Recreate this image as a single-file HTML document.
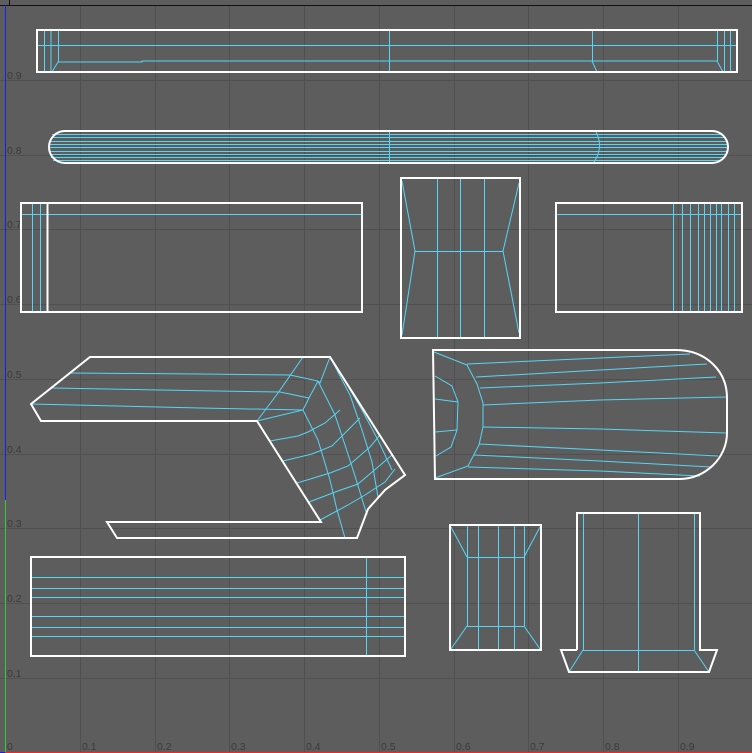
<!DOCTYPE html>
<html><head><meta charset="utf-8"><style>
html,body{margin:0;padding:0;background:#5d5d5d;}
svg{display:block;}
text{font-family:"Liberation Sans",sans-serif;font-size:10.5px;fill:#3a3a3a;}
</style></head><body>
<svg width="752" height="753" viewBox="0 0 752 753" xmlns="http://www.w3.org/2000/svg">
<rect width="752" height="753" fill="#5d5d5d"/>
<g stroke="#505050" stroke-width="1">
<line x1="80.5" y1="5" x2="80.5" y2="753"/><line x1="155.5" y1="5" x2="155.5" y2="753"/>
<line x1="229.5" y1="5" x2="229.5" y2="753"/><line x1="304.5" y1="5" x2="304.5" y2="753"/>
<line x1="379.5" y1="5" x2="379.5" y2="753"/><line x1="454.5" y1="5" x2="454.5" y2="753"/>
<line x1="528.5" y1="5" x2="528.5" y2="753"/><line x1="603.5" y1="5" x2="603.5" y2="753"/>
<line x1="678.5" y1="5" x2="678.5" y2="753"/>
<line x1="0" y1="80.5" x2="752" y2="80.5"/><line x1="0" y1="155.5" x2="752" y2="155.5"/>
<line x1="0" y1="229.5" x2="752" y2="229.5"/><line x1="0" y1="304.5" x2="752" y2="304.5"/>
<line x1="0" y1="379.5" x2="752" y2="379.5"/><line x1="0" y1="454.5" x2="752" y2="454.5"/>
<line x1="0" y1="528.5" x2="752" y2="528.5"/><line x1="0" y1="603.5" x2="752" y2="603.5"/>
<line x1="0" y1="678.5" x2="752" y2="678.5"/>
</g>
<line x1="0" y1="5.5" x2="752" y2="5.5" stroke="#111" stroke-width="1"/>
<line x1="9.5" y1="0" x2="9.5" y2="5" stroke="#111"/>
<line x1="5.5" y1="5" x2="5.5" y2="500" stroke="#1a1aff"/>
<line x1="5.5" y1="500" x2="5.5" y2="752" stroke="#33cc33"/>
<line x1="5" y1="752.5" x2="752" y2="752.5" stroke="#ff2020"/>
<line x1="0" y1="752.5" x2="5" y2="752.5" stroke="#1a1aff"/>
<g>
<text x="7" y="79">0.9</text><text x="7" y="154">0.8</text><text x="7" y="228">0.7</text>
<text x="7" y="303">0.6</text><text x="7" y="378">0.5</text><text x="7" y="453">0.4</text>
<text x="7" y="527">0.3</text><text x="7" y="602">0.2</text><text x="7" y="677">0.1</text>
<text x="7" y="750">0</text><text x="82" y="750">0.1</text><text x="157" y="750">0.2</text>
<text x="231" y="750">0.3</text><text x="306" y="750">0.4</text><text x="381" y="750">0.5</text>
<text x="456" y="750">0.6</text><text x="530" y="750">0.7</text><text x="605" y="750">0.8</text>
<text x="680" y="750">0.9</text>
</g>
<g stroke="#55d6f6" stroke-width="1" fill="none">
<line x1="44.5" y1="31" x2="44.5" y2="72"/><line x1="51" y1="31" x2="51" y2="72"/>
<line x1="58.5" y1="31" x2="58.5" y2="62"/><line x1="38" y1="45.5" x2="737" y2="45.5"/>
<polyline points="52,72 58,62 142,62 142,61 592,61 597,72"/>
<polyline points="592,61 717,61 723,72"/>
<line x1="389.5" y1="31" x2="389.5" y2="72"/><line x1="592.5" y1="31" x2="592.5" y2="61"/>
<line x1="717.5" y1="31" x2="717.5" y2="61"/><line x1="724.5" y1="31" x2="724.5" y2="72"/><line x1="730.5" y1="31" x2="730.5" y2="72"/>
<line x1="52" y1="134.5" x2="722" y2="134.5"/><line x1="51" y1="137.5" x2="724" y2="137.5"/>
<line x1="50" y1="141.5" x2="726" y2="141.5"/><line x1="50" y1="144.5" x2="727" y2="144.5"/>
<line x1="50" y1="147.5" x2="727" y2="147.5"/><line x1="50" y1="151.5" x2="727" y2="151.5"/>
<line x1="50" y1="154.5" x2="726" y2="154.5"/><line x1="51" y1="157.5" x2="724" y2="157.5"/>
<line x1="53" y1="160.5" x2="720" y2="160.5"/>
<line x1="389.5" y1="132" x2="389.5" y2="162"/>
<path d="M596,132 Q604,147 594,162"/>
<line x1="32.5" y1="204" x2="32.5" y2="311"/><line x1="40.5" y1="204" x2="40.5" y2="311"/>
<line x1="22" y1="214.5" x2="361" y2="214.5"/>
<line x1="437.5" y1="179" x2="437.5" y2="337"/><line x1="460.5" y1="179" x2="460.5" y2="337"/><line x1="484.5" y1="179" x2="484.5" y2="337"/>
<polyline points="402,181 415,251 402,335"/><polyline points="519,183 503,251 519,333"/>
<line x1="415" y1="251.5" x2="503" y2="251.5"/>
<line x1="557" y1="214.5" x2="741" y2="214.5"/>
<line x1="673.5" y1="204" x2="673.5" y2="311"/><line x1="682.5" y1="204" x2="682.5" y2="311"/>
<line x1="690.5" y1="204" x2="690.5" y2="311"/><line x1="698.5" y1="204" x2="698.5" y2="311"/>
<line x1="704.5" y1="204" x2="704.5" y2="311"/><line x1="710.5" y1="204" x2="710.5" y2="311"/>
<line x1="716.5" y1="204" x2="716.5" y2="311"/><line x1="721.5" y1="204" x2="721.5" y2="311"/>
<line x1="728.5" y1="204" x2="728.5" y2="311"/><line x1="734.5" y1="204" x2="734.5" y2="311"/>
<polyline points="71,373 200,374 290,375 318,381"/>
<polyline points="52,388 160,390 280,392 309,398"/>
<polyline points="31,404 200,408 303,410"/>
<polyline points="303,357 278,393 257,421"/>
<polyline points="318,381 309,398 303,410 257,421"/>
<polyline points="330,357 320,383 318,381"/>
<polyline points="270,441 298,436 308,432 325,423 340,410"/>
<polyline points="283,461 312,454 332,446 350,428 360,418"/>
<polyline points="297,483 330,473 348,466 370,447 380,435"/>
<polyline points="309,502 338,491 358,484 378,467 392,455"/>
<polyline points="320,520 348,505 365,495 385,482 395,469"/>
<polyline points="318,381 335,415 345,445 355,476 367,515"/>
<polyline points="330,357 350,395 362,430 372,462 378,497"/>
<polyline points="345,381 362,410 378,440 392,470"/>
<polyline points="303,410 318,440 330,480 337,510 345,538"/>
<polyline points="434,352 467,365 477,384 483,403 483,427 479,445 468,466 435,478"/>
<polyline points="435,376 452,386 458,402 457,430 451,447 436,456"/>
<line x1="435" y1="399" x2="458" y2="402"/><line x1="435" y1="432" x2="457" y2="430"/>
<polyline points="467,364 600,358 690,354"/><polyline points="476,377 600,370 707,364"/>
<polyline points="480,388 600,383 716,377"/><polyline points="483,405 600,400 726,397"/>
<polyline points="483,427 600,429 727,433"/><polyline points="479,444 600,450 718,456"/>
<polyline points="474,455 600,461 711,467"/><polyline points="468,467 600,471 700,476"/>
<line x1="32" y1="577.5" x2="404" y2="577.5"/><line x1="32" y1="588.5" x2="404" y2="588.5"/>
<line x1="32" y1="597.5" x2="404" y2="597.5"/><line x1="32" y1="616.5" x2="404" y2="616.5"/>
<line x1="32" y1="627.5" x2="404" y2="627.5"/><line x1="32" y1="636.5" x2="404" y2="636.5"/>
<line x1="366.5" y1="558" x2="366.5" y2="655"/>
<rect x="467.5" y="557.5" width="57" height="69"/>
<line x1="478.5" y1="526" x2="478.5" y2="649"/><line x1="498.5" y1="526" x2="498.5" y2="649"/><line x1="514.5" y1="526" x2="514.5" y2="649"/>
<line x1="467.5" y1="526" x2="467.5" y2="557"/><line x1="524.5" y1="526" x2="524.5" y2="557"/>
<line x1="451" y1="527" x2="467" y2="557"/><line x1="540" y1="527" x2="524" y2="557"/>
<line x1="467" y1="626" x2="451" y2="649"/><line x1="524" y1="626" x2="540" y2="649"/>
<line x1="583.5" y1="514" x2="583.5" y2="650"/><line x1="694.5" y1="514" x2="694.5" y2="650"/>
<line x1="638.5" y1="514" x2="638.5" y2="672"/>
<line x1="583" y1="650.5" x2="694" y2="650.5"/>
<line x1="583" y1="650" x2="569" y2="672"/><line x1="694" y1="650" x2="709" y2="672"/>
</g>
<g stroke="#ffffff" stroke-width="2" fill="none" stroke-linejoin="miter">
<rect x="37" y="30" width="700" height="42"/>
<path d="M65,131 L712,131 A16,16 0 0 1 712,163 L65,163 A16,16 0 0 1 65,131 Z"/>
<rect x="21" y="203" width="341" height="109"/>
<line x1="47.5" y1="204" x2="47.5" y2="311"/>
<rect x="401" y="178" width="119" height="160"/>
<rect x="556" y="203" width="186" height="109"/>
<polygon points="31,404 90,357 330,357 405,475 385,490 368,509 357,538 117,538 107,522 321,522 257,421 41,421"/>
<path d="M433,350 L676,350 C705,350 727,370 727,398 L727,433 C727,458 705,479 680,479 L435,479 Z"/>
<rect x="31" y="557" width="374" height="99"/>
<rect x="450" y="525" width="91" height="125"/>
<polyline points="577,650 577,513 700,513 700,650 717,650 709,672 569,672 561,650 577,650"/>
</g>
</svg>
</body></html>
